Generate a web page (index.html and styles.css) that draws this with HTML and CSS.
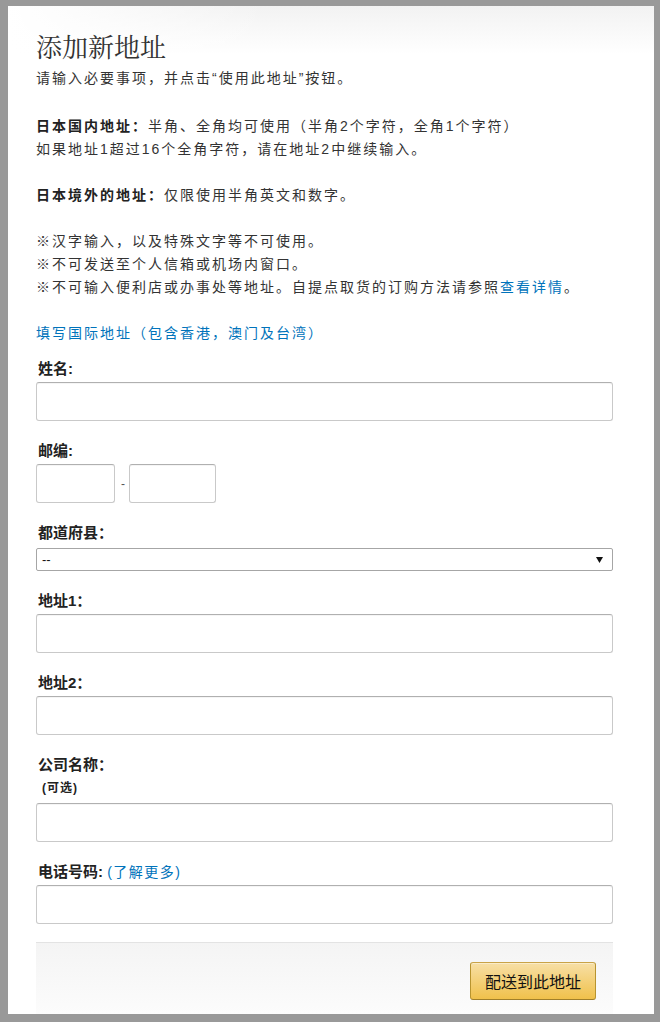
FILE: index.html
```html
<!DOCTYPE html>
<html lang="zh-CN">
<head>
<meta charset="utf-8">
<title>添加新地址</title>
<link rel="stylesheet" href="styles.css">
</head>
<body>
<div class="panel">
  <h1 class="title">添加新地址</h1>
  <p class="intro">请输入必要事项，并点击“使用此地址”按钮。</p>
  <p class="para"><b>日本国内地址：</b>半角、全角均可使用（半角2个字符，全角1个字符）<br>如果地址1超过16个全角字符，请在地址2中继续输入。</p>
  <p class="para"><b>日本境外的地址：</b>仅限使用半角英文和数字。</p>
  <p class="para">※汉字输入，以及特殊文字等不可使用。<br>※不可发送至个人信箱或机场内窗口。<br>※不可输入便利店或办事处等地址。自提点取货的订购方法请参照<a class="link" href="#">查看详情</a>。</p>
  <p class="para intl"><a class="link" href="#">填写国际地址（包含香港，澳门及台湾）</a></p>

  <form class="form">
    <div class="field">
      <label class="label">姓名:</label>
      <input class="input" type="text">
    </div>
    <div class="field">
      <label class="label">邮编:</label>
      <div class="postal">
        <input class="input zip1" type="text">
        <span class="dash">-</span>
        <input class="input zip2" type="text">
      </div>
    </div>
    <div class="field">
      <label class="label label-select">都道府县：</label>
      <div class="select">
        <span class="select-text">--</span>
        <svg class="arrow" width="7" height="6" viewBox="0 0 7 6"><polygon points="0,0 7,0 3.5,6" fill="#111"/></svg>
      </div>
    </div>
    <div class="field">
      <label class="label">地址1：</label>
      <input class="input" type="text">
    </div>
    <div class="field">
      <label class="label">地址2：</label>
      <input class="input" type="text">
    </div>
    <div class="field">
      <label class="label">公司名称：</label>
      <div class="optional">(可选)</div>
      <input class="input" type="text">
    </div>
    <div class="field field-last">
      <label class="label">电话号码: <a class="link link-normal" href="#">(了解更多)</a></label>
      <input class="input" type="text">
    </div>
    <div class="footer">
      <button class="button" type="button">配送到此地址</button>
    </div>
  </form>
</div>
</body>
</html>
```

FILE: styles.css
```css
html, body {
  margin: 0;
  padding: 0;
}
body {
  background: #999999;
  padding: 6px 6px 8px 8px;
  font-family: "Liberation Sans", "Noto Sans CJK SC", sans-serif;
  color: #222;
}
.panel {
  height: 1008px;
  overflow: hidden;
  box-sizing: border-box;
  padding: 24px 41px 0 28px;
  background:
    linear-gradient(to right, #ffffff 0px, rgba(255,255,255,0) 260px),
    linear-gradient(to bottom, #f2f2f2 0px, #ffffff 48px);
}
.title {
  margin: 0 0 5px 0;
  font-family: "Noto Serif CJK SC", "Noto Sans CJK SC", serif;
  font-weight: 400;
  font-size: 26px;
  line-height: 32px;
  color: #333;
}
.intro, .para {
  margin: 0 0 23px 0;
  font-size: 14px;
  line-height: 23px;
  letter-spacing: 2px;
  color: #333;
}
.intro {
  margin-bottom: 25px;
}
.para b {
  font-weight: 700;
  color: #222;
}
.link {
  color: #0073bb;
  text-decoration: none;
}
.intl {
  margin-bottom: 14px;
}
.form {
  margin: 0;
}
.field {
  margin-bottom: 20px;
}
.field-last {
  margin-bottom: 18px;
}
.label {
  display: block;
  padding-left: 2px;
  margin-bottom: 3px;
  font-size: 15px;
  line-height: 20px;
  font-weight: 700;
  color: #222;
}
.label-select {
  margin-bottom: 5px;
}
.link-normal {
  font-weight: 400;
  font-size: 14px;
  letter-spacing: 1.5px;
}
.optional {
  margin: 4px 0 6px 6px;
  font-size: 12px;
  line-height: 18px;
  font-weight: 700;
  letter-spacing: 1px;
  color: #222;
}
.input {
  display: block;
  box-sizing: border-box;
  width: 100%;
  height: 39px;
  margin: 0;
  padding: 3px 7px;
  border: 1px solid #c9c9c9;
  border-top-color: #b0b0b0;
  border-radius: 3px;
  background: #fff;
  box-shadow: 0 1px 0 rgba(0,0,0,0.04) inset;
  font-size: 14px;
  outline: none;
}
.postal {
  display: flex;
  align-items: center;
  gap: 6px;
}
.zip1 {
  width: 79px;
}
.zip2 {
  width: 87px;
}
.dash {
  font-size: 12px;
  color: #555;
  width: 2px;
}
.select {
  box-sizing: border-box;
  height: 23px;
  display: flex;
  align-items: center;
  justify-content: space-between;
  padding: 0 9px 0 5px;
  border: 1px solid #a6a6a6;
  border-radius: 2px;
  background: #fff;
  font-size: 13px;
  color: #111;
}
.select-text {
  line-height: 20px;
}
.footer {
  display: flex;
  justify-content: flex-end;
  padding: 19px 17px 40px 0;
  border-top: 1px solid #e3e3e3;
  background: linear-gradient(to bottom, #f4f4f4, #ffffff);
}
.button {
  box-sizing: border-box;
  width: 126px;
  height: 38px;
  border: 1px solid;
  border-color: #c9a347 #b8942f #a07f2a;
  border-radius: 3px;
  background: linear-gradient(to bottom, #f7dfa5, #f0c14b);
  box-shadow: 0 1px 0 rgba(255,255,255,0.4) inset;
  font-family: "Liberation Sans", "Noto Sans CJK SC", sans-serif;
  font-size: 16px;
  color: #111;
  padding: 0;
  cursor: pointer;
}
```
